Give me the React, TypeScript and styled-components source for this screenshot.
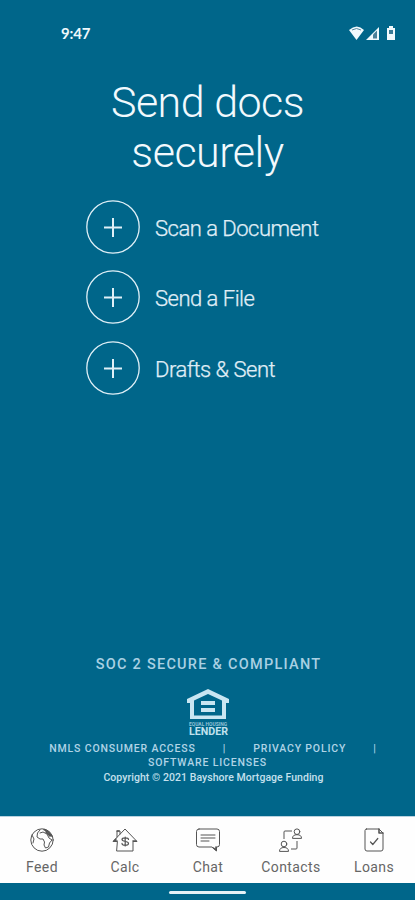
import React from "react";
import styled, { createGlobalStyle } from "styled-components";

const GlobalStyle = createGlobalStyle`
  * { box-sizing: border-box; }
  body { margin: 0; background: #00668a; }
`;

const Screen = styled.div`
  display: flex;
  flex-direction: column;
  width: 415px;
  height: 900px;
  overflow: hidden;
  background: #00668a;
  color: #e6f3fa;
  font-family: Roboto, sans-serif;
`;

const StatusBar = styled.header`
  display: flex;
  justify-content: space-between;
  align-items: center;
  height: 65px;
  padding: 0 17px 0 61px;
`;

const Clock = styled.span`
  font: 700 15px/20px Lato, sans-serif;
  letter-spacing: -0.2px;
  color: #eef8fc;
`;

const StatusIcons = styled.svg`
  display: block;
  width: 50px;
  height: 18px;
`;

const Title = styled.h1`
  margin: 12px 0 0;
  text-align: center;
  font-size: 43px;
  font-weight: 300;
  line-height: 50px;
  letter-spacing: -0.5px;
  color: #f2f9fd;
`;

const Actions = styled.div`
  display: flex;
  flex-direction: column;
  gap: 16.5px;
  margin: 22.5px 0 0 86px;
`;

const Action = styled.button`
  display: flex;
  align-items: center;
  gap: 15px;
  height: 54px;
  padding: 0;
  border: 0;
  background: none;
  color: #e0eff7;
  font: 300 22px/28px Roboto, sans-serif;
  letter-spacing: -0.5px;
  -webkit-text-stroke: 0.25px #e0eff7;
`;

const ActionLabel = styled.span`
  padding-top: 4px;
`;

const PlusCircle = styled.svg`
  width: 54px;
  height: 54px;
  fill: none;
  stroke: #e0f0f7;
`;

const Footer = styled.footer`
  display: flex;
  flex-direction: column;
  align-items: center;
  margin-top: auto;
  height: 161px;
  color: #b0d4e6;
`;

const Compliance = styled.div`
  padding: 1px 0 0 2px;
  font-size: 14.5px;
  font-weight: 500;
  line-height: 18px;
  letter-spacing: 1.26px;
  color: #a9d0e3;
`;

const LenderLogo = styled.svg`
  display: block;
  width: 44px;
  height: 50px;
  margin: 13px 0 5px 1px;
`;

const LinkRow = styled.nav<{ $shift?: number }>`
  display: flex;
  padding-left: ${({ $shift = 0 }) => $shift}px;
  font-size: 10.5px;
  font-weight: 500;
  line-height: 14px;
  letter-spacing: 0.84px;
  white-space: nowrap;
`;

const Divider = styled.span<{ $last?: boolean }>`
  margin: 0 ${({ $last }) => ($last ? 0 : 27)}px 0 27px;
`;

const Copyright = styled.div`
  padding-left: 12px;
  margin-top: 1px;
  font-size: 10.5px;
  font-weight: 500;
  line-height: 14px;
  letter-spacing: 0.05px;
  color: #c4e0ed;
`;

const TabBar = styled.nav`
  display: grid;
  grid-template-columns: repeat(5, 1fr);
  height: 67px;
  border-top: 1px solid #b8d2df;
  background: #fefefe;
`;

const Tab = styled.a`
  display: flex;
  flex-direction: column;
  align-items: center;
  padding: 11px 0 0 1px;
  color: #666;
  font-size: 14px;
  font-weight: 400;
  line-height: 18px;
  letter-spacing: 0.4px;
`;

const TabIcon = styled.svg`
  width: 26px;
  height: 24px;
  margin-bottom: 6px;
  fill: none;
  stroke: #555;
  stroke-width: 1;
  stroke-linejoin: round;
  stroke-linecap: round;
`;

const HomeArea = styled.div`
  display: flex;
  justify-content: center;
  height: 17px;
  padding-top: 8px;
`;

const HomeIndicator = styled.div`
  width: 77px;
  height: 3px;
  border-radius: 2px;
  background: #e5f2f7;
`;

const tabs = [
  {
    label: "Feed",
    icon: (
      <>
        <circle cx="13" cy="12" r="11.2" />
        <path d="M11 2 8.5 5 8 9l3 2h3l1.5 3-.5 3 1.5 3 3-1 1-4 2.5-3-3-2-2-4-4-2-3 1M3 7l2 4-1 4" />
        <path d="m15 1.5 4.5 2.5 3 4M17 4l4 4" strokeWidth="1.6" />
      </>
    ),
  },
  {
    label: "Calc",
    icon: (
      <>
        <path d="M5 13.5H1L13 1l12 12.5h-4V23H5Z" />
        <path d="M5 9V3h3v3" />
        <path d="m2 13 2-2m1-8h2m-5 10h3m16 0h3" strokeWidth="1.6" />
        <path d="M16.5 11.5c0-1.2-1-1.7-3.3-1.7s-3.2.6-3.2 1.8c0 2.8 6.5 1 6.5 3.8 0 1.3-1 1.8-3.3 1.8s-3.2-.7-3.2-1.8M13.2 9v9" strokeWidth="1.2" />
      </>
    ),
  },
  {
    label: "Chat",
    icon: (
      <>
        <path d="M4 1h18q2.5 0 2.5 2.5v13q0 2.5-2.5 2.5h-.5v4L17 19H4q-2.5 0-2.5-2.5v-13Q1.5 1 4 1Z" />
        <path d="M6 7h14M6 10h14M6 13h8" />
        <path d="m18.5 20 2.5 2v-3" strokeWidth="1.6" />
      </>
    ),
  },
  {
    label: "Contacts",
    icon: (
      <>
        <path d="M6 11V4q0-1 1-1h7M19 13v7q0 1-1 1h-5" strokeLinecap="butt" />
        <circle cx="19" cy="3.7" r="2.8" />
        <path d="M14.5 10q0-3.3 4.5-3.3t4.5 3.3Z" />
        <circle cx="6" cy="16" r="2.8" />
        <path d="M1.5 23q0-3.5 4.5-3.5t4.5 3.5Z" />
      </>
    ),
  },
  {
    label: "Loans",
    icon: (
      <>
        <path d="M5.5 1H18l4 4v16q0 2-2 2H6q-2 0-2-2V2.5Q4 1 5.5 1Z" />
        <path d="M18 1v4h4" strokeWidth="1.6" />
        <path d="m9.5 14 2.3 2.5 5-6" strokeWidth="1.2" />
      </>
    ),
  },
];

export default function App() {
  return (
    <Screen>
      <GlobalStyle />
      <StatusBar>
        <Clock>9:47</Clock>
        <StatusIcons viewBox="0 0 50 18">
          <path d="M1 6Q9-1 16 6L8.5 16Z" fill="#f0f9fd" />
          <path d="M4 6Q8.5 3 13 6" fill="none" stroke="#56869c" strokeWidth="1" />
          <path d="M18 16 31 3v13Z" fill="#f0f9fd" />
          <path d="m25 14.5 0-4 4-4v8Z" fill="#4a8099" />
          <path d="M41 2h4v2h2v12h-8V4h2Z" fill="#f0f9fd" />
          <path d="M41 6h4v4h-4Z" fill="#397a96" />
        </StatusIcons>
      </StatusBar>
      <Title>Send docs<br />securely</Title>
      <Actions>
        {["Scan a Document", "Send a File", "Drafts & Sent"].map((label) => (
          <Action key={label}>
            <PlusCircle viewBox="0 0 54 54">
              <circle cx="27" cy="27" r="26.2" strokeWidth="1.3" />
              <path d="M18 27.5h18M27 18v19" strokeWidth="2" />
            </PlusCircle>
            <ActionLabel>{label}</ActionLabel>
          </Action>
        ))}
      </Actions>
      <Footer>
        <Compliance>SOC 2 SECURE &amp; COMPLIANT</Compliance>
        <LenderLogo viewBox="0 0 44 50">
          <path fill="#c9e6f2" fillRule="evenodd" d="M22 2 43 12v4h-3v16H4V16H1v-4ZM22 7 8 13.5v15h28v-15Z" />
          <path fill="#c9e6f2" d="M15 14h14v4H15zM15 21h14v4H15z" />
          <text x="3" y="38.5" textLength="38" lengthAdjust="spacingAndGlyphs" fill="#91c1d6" fontSize="4.8" fontWeight="700">EQUAL HOUSING</text>
          <text x="3" y="48" textLength="39" lengthAdjust="spacingAndGlyphs" fill="#c2e2ef" fontSize="10" fontWeight="700">LENDER</text>
        </LenderLogo>
        <LinkRow $shift={11}>
          <span>NMLS CONSUMER ACCESS</span>
          <Divider>|</Divider>
          <span>PRIVACY POLICY</span>
          <Divider $last>|</Divider>
        </LinkRow>
        <LinkRow>
          <span>SOFTWARE LICENSES</span>
        </LinkRow>
        <Copyright>Copyright © 2021 Bayshore Mortgage Funding</Copyright>
      </Footer>
      <TabBar>
        {tabs.map(({ label, icon }) => (
          <Tab key={label}>
            <TabIcon viewBox="0 0 26 24">{icon}</TabIcon>
            {label}
          </Tab>
        ))}
      </TabBar>
      <HomeArea><HomeIndicator /></HomeArea>
    </Screen>
  );
}
